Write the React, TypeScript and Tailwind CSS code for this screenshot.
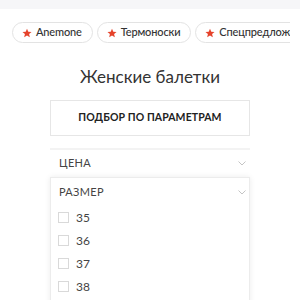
import React from "react";

const Star = () => (
  <svg width="10" height="10" viewBox="0 0 24 24" className="shrink-0">
    <path d="M12 1.5l3.1 7.2 7.8.6-5.9 5.1 1.8 7.6L12 17.9 5.2 22l1.8-7.6L1.1 9.3l7.8-.6z" fill="#e5432b" />
  </svg>
);

const Chevron = () => (
  <svg width="8" height="5" viewBox="0 0 8 5" className="shrink-0">
    <path d="M0.5 0.5L4 4L7.5 0.5" fill="none" stroke="#c4c4c4" strokeWidth="1" />
  </svg>
);

const tags = ["Anemone", "Термоноски", "Спецпредложения"];
const sizes = ["35", "36", "37", "38"];

export default function App() {
  return (
    <div className="w-[300px] h-[300px] overflow-hidden bg-white text-[#333]" style={{ fontFamily: "Lato, 'Open Sans', sans-serif" }}>
      <div className="h-[9px] bg-[#f6f6f8]" />
      <div className="w-[290px] overflow-hidden pl-[12px] pt-[13px]">
        <div className="flex gap-[4px] whitespace-nowrap">
          {tags.map((t) => (
            <div key={t} className="flex items-center gap-[4px] h-[21px] pl-[9px] pr-[10px] rounded-full border border-[#e3e3e3] text-[11px] tracking-[-0.15px] font-medium text-[#333] shrink-0">
              <Star />
              <span>{t}</span>
            </div>
          ))}
        </div>
      </div>
      <div className="mt-[23px] text-center text-[17px] leading-[22px] text-[#333]">Женские балетки</div>
      <div className="mx-[50px] mt-[12px] h-[36px] border border-[#e6e6e6] flex items-center justify-center text-[10.5px] font-bold tracking-[0.1px] text-[#222]">
        ПОДБОР ПО ПАРАМЕТРАМ
      </div>
      <div className="mx-[50px] mt-[12px] border-t-2 border-[#f3f3f3] h-[29px] flex items-center justify-between pl-[9px] pr-[4px] text-[11px] text-[#444] tracking-[0.3px]">
        <span>ЦЕНА</span>
        <Chevron />
      </div>
      <div className="mx-[50px] border border-[#ececec] border-b-0 shadow-[0_0_6px_rgba(0,0,0,0.08)] h-[130px]">
        <div className="h-[28px] flex items-center justify-between pl-[8px] pr-[3px] text-[11px] text-[#444] tracking-[0.3px]">
          <span>РАЗМЕР</span>
          <Chevron />
        </div>
        <div className="pt-[6px] pl-[7px] flex flex-col gap-[12px]">
          {sizes.map((s) => (
            <div key={s} className="flex items-center gap-[7px] h-[11px]">
              <div className="w-[11px] h-[11px] border border-[#d9d9d9] bg-white" />
              <span className="text-[12px] text-[#444]">{s}</span>
            </div>
          ))}
        </div>
      </div>
    </div>
  );
}
